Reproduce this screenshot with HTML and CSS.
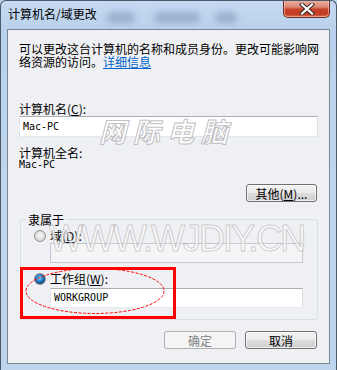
FILE: index.html
```html
<!DOCTYPE html>
<html>
<head>
<meta charset="utf-8">
<link rel="stylesheet" href="styles.css">
</head>
<body>
<div class="window">
  <div class="titlebar">
    <span class="title">计算机名/域更改</span>
    <span class="blob b1"></span><span class="blob b2"></span><span class="blob b3"></span>
    <div class="close">
      <svg width="20" height="12" viewBox="0 0 20 12">
        <path d="M5 1.5 L15 10.5 M15 1.5 L5 10.5" stroke="#3a2a2a" stroke-width="4.2" stroke-linecap="square" fill="none"/>
        <path d="M5 1.5 L15 10.5 M15 1.5 L5 10.5" stroke="#ffffff" stroke-width="2.2" stroke-linecap="square" fill="none"/>
      </svg>
    </div>
  </div>
  <div class="panel">
    <p class="desc">可以更改这台计算机的名称和成员身份。更改可能影响网<br>络资源的访问。<a class="link" href="#">详细信息</a></p>
    <div class="label lbl-name">计算机名(<u>C</u>):</div>
    <div class="input name-input">Mac-PC</div>
    <div class="label lbl-full">计算机全名:</div>
    <div class="value">Mac-PC</div>
    <div class="row-right"><button class="btn">其他(<u>M</u>)...</button></div>
    <fieldset class="group">
      <legend class="legend">隶属于</legend>
      <div class="radio-row first"><span class="radio"></span><span class="rlabel">域(<u>D</u>):</span></div>
      <div class="input sub disabled"></div>
      <div class="radio-row second"><span class="radio checked"></span><span class="rlabel">工作组(<u>W</u>):</span></div>
      <div class="input sub">WORKGROUP</div>
    </fieldset>
    <div class="actions">
      <button class="btn disabled">确定</button>
      <button class="btn">取消</button>
    </div>
  </div>
  <div class="wm wm-cn">网际电脑</div>
  <div class="wm wm-en">WWW.WJDIY.CN</div>
  <div class="redbox"></div>
  <svg class="ellipse" width="150" height="52" viewBox="0 0 150 52">
    <ellipse cx="71" cy="25" rx="69" ry="22.5" fill="none" stroke="#ff0000" stroke-width="1" stroke-dasharray="3 1.5"/>
  </svg>
</div>
</body>
</html>
```
FILE: styles.css
```css
html, body {
  margin: 0;
  padding: 0;
}
body {
  width: 337px;
  height: 370px;
  overflow: hidden;
  font-family: "Noto Sans CJK SC", "Noto Sans", sans-serif;
  font-size: 12px;
  color: #000;
  background: #bcd3ec;
}
.window {
  position: relative;
  width: 337px;
  height: 370px;
  box-sizing: border-box;
  border: 1px solid #4b5969;
  border-bottom: none;
  border-radius: 6px 6px 0 0;
  background: linear-gradient(to bottom, #c5daf1 0, #b9d1ec 28px, #c0d6ee 200px, #bdd4ed 100%);
  display: flex;
  flex-direction: column;
  overflow: hidden;
}
.titlebar {
  position: relative;
  height: 28px;
  display: flex;
  align-items: flex-start;
  padding-left: 7px;
  flex: none;
}
.title {
  margin-top: 5px;
  line-height: 16px;
  font-size: 12px;
  position: relative;
  z-index: 1;
}
.blob {
  position: absolute;
  top: 11px;
  height: 11px;
  border-radius: 6px;
  background: #8fa3c4;
  filter: blur(3px);
  opacity: 0.75;
}
.b1 { left: 106px; width: 28px; }
.b2 { left: 153px; width: 46px; }
.b3 { left: 214px; width: 22px; }
.close {
  margin-left: auto;
  margin-right: 6px;
  margin-top: -1px;
  width: 47px;
  height: 18px;
  box-sizing: border-box;
  border: 1px solid #6e2b22;
  border-top: none;
  border-radius: 0 0 5px 5px;
  background: linear-gradient(to bottom, #eab0a3 0, #dd8a78 40%, #c8432c 55%, #c13a22 80%, #d86a4c 100%);
  display: flex;
  align-items: center;
  justify-content: center;
  box-shadow: inset 0 0 0 1px rgba(255, 220, 210, 0.5);
}
.close svg {
  display: block;
}
.panel {
  margin: 0 6px;
  height: 335px;
  box-sizing: border-box;
  border: 1px solid #7a8796;
  background: #eff0f3;
  padding: 12px 10px 0 11px;
  flex: none;
}
.desc {
  margin: 0;
  line-height: 13px;
  white-space: nowrap;
}
.link {
  color: #0066cc;
  text-decoration: underline;
}
.label {
  line-height: 13px;
}
.lbl-name {
  margin-top: 34px;
}
.input {
  height: 21px;
  box-sizing: border-box;
  border: 1px solid;
  border-color: #abadb3 #dbdfe6 #e3e9ef #e2e3ea;
  background: #fff;
  font-family: "DejaVu Sans Mono", "Liberation Mono", monospace;
  font-size: 10px;
  line-height: 19px;
  padding-left: 3px;
}
.name-input {
  margin-top: 1px;
  margin-right: 1px;
}
.lbl-full {
  margin-top: 9px;
}
.value {
  font-family: "DejaVu Sans Mono", "Liberation Mono", monospace;
  font-size: 10px;
  line-height: 12px;
}
.row-right {
  display: flex;
  justify-content: flex-end;
  margin-top: 13px;
  padding-right: 2px;
}
.btn {
  width: 71px;
  height: 18px;
  box-sizing: border-box;
  padding: 0;
  margin: 0;
  border: 1px solid #707070;
  border-radius: 3px;
  background: linear-gradient(to bottom, #f2f2f2 0, #ebebeb 50%, #dddddd 51%, #cfcfcf 100%);
  font-family: "Noto Sans CJK SC", sans-serif;
  font-size: 12px;
  line-height: 15px;
  color: #000;
  box-shadow: inset 0 0 0 1px rgba(255, 255, 255, 0.7);
}
.btn.disabled {
  border-color: #adb2b5;
  background: #f4f4f4;
  color: #838383;
  box-shadow: none;
}
.group {
  margin: 11px 1px 0 1px;
  padding: 3px 14px 11px 13px;
  border: 1px solid #d5dfe5;
  border-radius: 3px;
  min-width: 0;
}
.legend {
  padding: 0 2px;
  margin-left: -8px;
  line-height: 13px;
}
.radio-row {
  display: flex;
  align-items: center;
  height: 14px;
  line-height: 14px;
}
.radio-row.second {
  margin-top: 9px;
}
.radio {
  width: 12px;
  height: 12px;
  box-sizing: border-box;
  border-radius: 50%;
  border: 1px solid #8e8f8f;
  background: radial-gradient(circle at 50% 45%, #f4f4f4 0, #e4e4e4 50%, #c9c9c9 100%);
  margin-right: 4px;
  flex: none;
}
.radio.checked {
  background: radial-gradient(circle at 45% 40%, #b7ecff 0, #3fa4e4 25%, #105a9a 60%, #1b3c5c 80%, #d0d0d0 82%);
}
.sub {
  margin-left: 16px;
  height: 20px;
  line-height: 18px;
}
.sub.disabled {
  background: #f5f5f7;
  border-color: #c6cad0;
}
.radio-row.second + .sub {
  margin-top: 2px;
}
.actions {
  display: flex;
  justify-content: flex-end;
  gap: 9px;
  margin-top: 11px;
  padding-right: 2px;
}
.actions .btn {
  width: 72px;
}
.wm {
  position: absolute;
  pointer-events: none;
  white-space: nowrap;
}
.wm-cn {
  left: 98px;
  top: 114px;
  font-size: 27px;
  line-height: 32px;
  font-weight: bold;
  font-style: italic;
  letter-spacing: 7px;
  color: rgba(255, 255, 255, 0.95);
  -webkit-text-stroke: 1px rgba(165, 165, 170, 0.7);
}
.wm-en {
  left: 48px;
  top: 216px;
  font-family: "Liberation Sans", Arial, sans-serif;
  font-size: 36px;
  line-height: 44px;
  letter-spacing: -2px;
  color: rgba(255, 255, 255, 0.6);
  -webkit-text-stroke: 1px rgba(165, 165, 165, 0.5);
}
.redbox {
  position: absolute;
  left: 19px;
  top: 266px;
  width: 156px;
  height: 52px;
  box-sizing: border-box;
  border: 3px solid #ff0000;
}
.ellipse {
  position: absolute;
  left: 23px;
  top: 265px;
}
```
